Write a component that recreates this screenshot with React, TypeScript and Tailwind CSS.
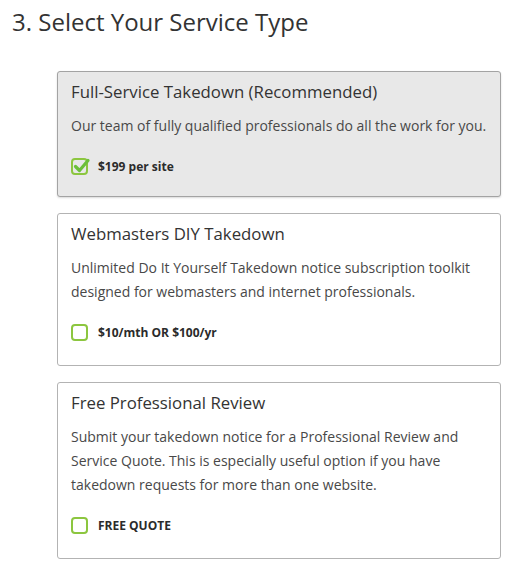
import React from 'react';

type Option = {
  title: string;
  desc: string;
  label: string;
  checked?: boolean;
};

const options: Option[] = [
  {
    title: 'Full-Service Takedown (Recommended)',
    desc: 'Our team of fully qualified professionals do all the work for you.',
    label: '$199 per site',
    checked: true,
  },
  {
    title: 'Webmasters DIY Takedown',
    desc: 'Unlimited Do It Yourself Takedown notice subscription toolkit designed for webmasters and internet professionals.',
    label: '$10/mth OR $100/yr',
  },
  {
    title: 'Free Professional Review',
    desc: 'Submit your takedown notice for a Professional Review and Service Quote. This is especially useful option if you have takedown requests for more than one website.',
    label: 'FREE QUOTE',
  },
];

const Check = ({ checked }: { checked?: boolean }) => (
  <svg width="20" height="17" viewBox="0 0 20 17" className="shrink-0 overflow-visible">
    <rect x="1" y="1" width="15" height="15" rx="3" fill="none" stroke="#8cc63f" strokeWidth="2" />
    {checked && (
      <path d="M4.5 8.5 L8.5 12.5 L17 2.5" fill="none" stroke="#6bbf3a" strokeWidth="3.2" strokeLinecap="round" strokeLinejoin="round" />
    )}
  </svg>
);

export default function App() {
  return (
    <div className="min-h-screen bg-white pl-[12px] pt-[4px] pb-4 font-['Open_Sans',sans-serif] text-[#333]">
      <h2 className="text-[24px] leading-[36px] text-[#333]">3. Select Your Service Type</h2>

      <div className="ml-[45px] mt-[31px] flex w-[444px] flex-col gap-[16px]">
        {options.map((o, i) => (
          <div
            key={i}
            className={
              o.checked
                ? 'rounded-[3px] border border-[#a3a3a3] bg-[#e8e8e8] px-[13px] pt-[8px] pb-[21px] shadow-[0_1px_2px_rgba(0,0,0,0.15)]'
                : 'rounded-[3px] border border-[#b3b3b3] bg-white px-[13px] pt-[8px] pb-[24px]'
            }
          >
            <div className="text-[16.8px] leading-[24px] text-[#333]">{o.title}</div>
            <p className="mt-[10px] text-[14px] leading-[24px] text-[#484848]">{o.desc}</p>
            <div className="mt-[20px] flex items-center gap-[7px]">
              <Check checked={o.checked} />
              <span className="text-[12px] leading-[17px] font-bold text-[#2b2b2b]">{o.label}</span>
            </div>
          </div>
        ))}
      </div>
    </div>
  );
}
